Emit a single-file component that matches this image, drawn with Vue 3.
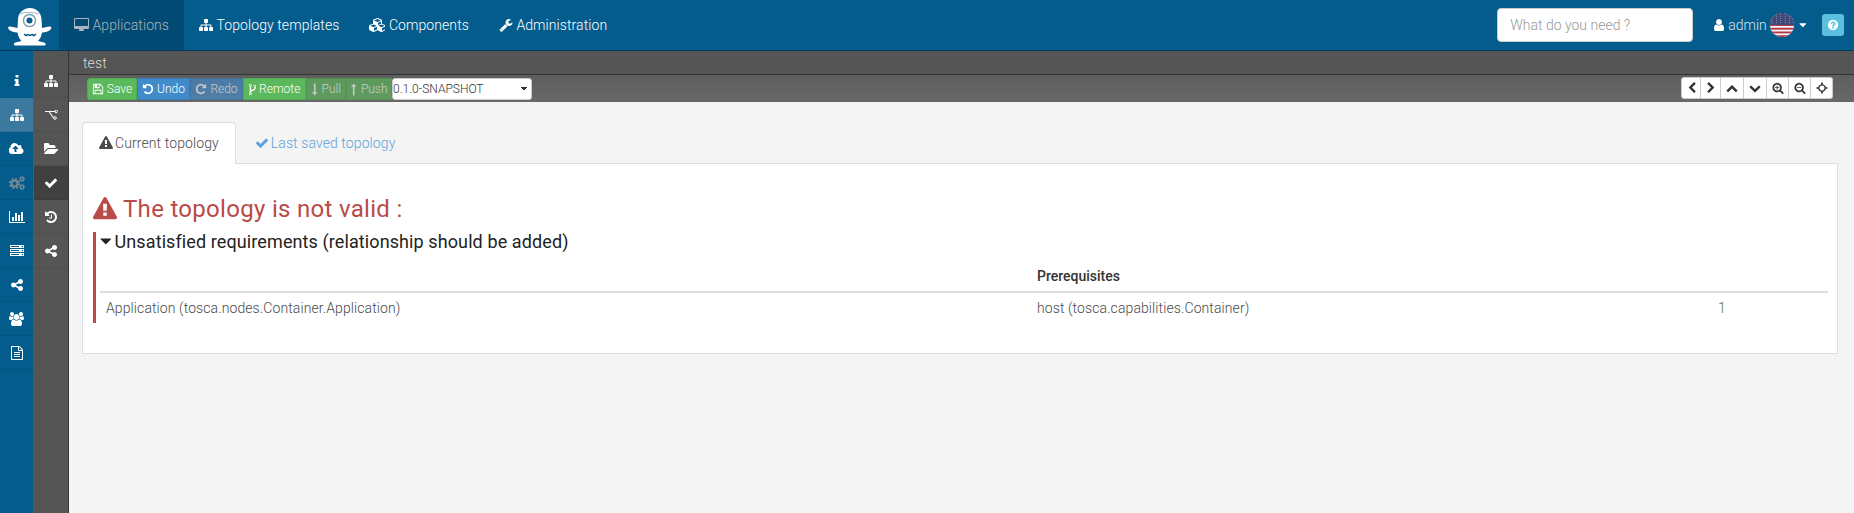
<script setup>
import { h } from 'vue';

// font-awesome like glyphs, 1792 units = 1em
const glyphs = {
  info: [1792, 'M1216 1344v128q0 26-19 45t-45 19h-512q-26 0-45-19t-19-45v-128q0-26 19-45t45-19h64v-384h-64q-26 0-45-19t-19-45v-128q0-26 19-45t45-19h384q26 0 45 19t19 45v576h64q26 0 45 19t19 45zm-128-1152v192q0 26-19 45t-45 19h-256q-26 0-45-19t-19-45v-192q0-26 19-45t45-19h256q26 0 45 19t19 45z'],
  sitemap: [1792, 'M1792 1248v320q0 40-28 68t-68 28h-320q-40 0-68-28t-28-68v-320q0-40 28-68t68-28h96v-192h-512v192h96q40 0 68 28t28 68v320q0 40-28 68t-68 28h-320q-40 0-68-28t-28-68v-320q0-40 28-68t68-28h96v-192h-512v192h96q40 0 68 28t28 68v320q0 40-28 68t-68 28h-320q-40 0-68-28t-28-68v-320q0-40 28-68t68-28h96v-192q0-52 38-90t90-38h512v-192h-96q-40 0-68-28t-28-68v-320q0-40 28-68t68-28h320q40 0 68 28t28 68v320q0 40-28 68t-68 28h-96v192h512q52 0 90 38t38 90v192h96q40 0 68 28t28 68z'],
  cloud: [1920, 'M1216 864q0-14-9-23l-352-352q-9-9-23-9t-23 9l-351 351q-10 12-10 24 0 14 9 23t23 9h224v352q0 13 9.5 22.5t22.5 9.5h192q13 0 22.5-9.5t9.5-22.5v-352h224q13 0 22.5-9.5t9.5-22.5zm640 288q0 159-112.5 271.5t-271.5 112.5h-1088q-185 0-316.5-131.5t-131.5-316.5q0-130 70-240t188-165q-2-30-2-43 0-212 150-362t362-150q156 0 285.5 87t188.5 231q71-62 166-62 106 0 181 75t75 181q0 76-41 138 130 31 213.5 135.5t83.5 238.5z'],
  chart: [2048, 'M640 896v512h-256v-512h256zm384-512v1024h-256v-1024h256zm1024 1152v128h-2048v-1536h128v1408h1920zm-640-896v768h-256v-768h256zm384-384v1152h-256v-1152h256z'],
  server: [1792, 'M128 1408h1024v-128h-1024v128zm0-512h1024v-128h-1024v128zm1568 448q0-40-28-68t-68-28-68 28-28 68 28 68 68 28 68-28 28-68zm-1568-960h1024v-128h-1024v128zm1568 448q0-40-28-68t-68-28-68 28-28 68 28 68 68 28 68-28 28-68zm0-512q0-40-28-68t-68-28-68 28-28 68 28 68 68 28 68-28 28-68zm96 832v384h-1792v-384h1792zm0-512v384h-1792v-384h1792zm0-512v384h-1792v-384h1792z'],
  share: [1792, 'M1344 1024q133 0 226.5 93.5t93.5 226.5-93.5 226.5-226.5 93.5-226.5-93.5-93.5-226.5q0-12 2-34l-360-180q-92 86-218 86-133 0-226.5-93.5t-93.5-226.5 93.5-226.5 226.5-93.5q126 0 218 86l360-180q-2-22-2-34 0-133 93.5-226.5t226.5-93.5 226.5 93.5 93.5 226.5-93.5 226.5-226.5 93.5q-126 0-218-86l-360 180q2 22 2 34t-2 34l360 180q92-86 218-86z'],
  users: [1920, 'M593 896q-162 5-265 128h-134q-82 0-138-40.5t-56-118.5q0-353 124-353 6 0 43.5 21t97.5 42.5 119 21.5q67 0 133-23-5 37-5 66 0 139 81 256zm1071 637q0 120-73 189.5t-194 69.5h-874q-121 0-194-69.5t-73-189.5q0-53 3.5-103.5t14-109 26.5-108.5 43-97.5 62-81 85.5-53.5 111.5-20q10 0 43 21.5t73 48 107 48 135 21.5 135-21.5 107-48 73-48 43-21.5q61 0 111.5 20t85.5 53.5 62 81 43 97.5 26.5 108.5 14 109 3.5 103.5zm-1024-1277q0 106-75 181t-181 75-181-75-75-181 75-181 181-75 181 75 75 181zm704 384q0 159-112.5 271.5t-271.5 112.5-271.5-112.5-112.5-271.5 112.5-271.5 271.5-112.5 271.5 112.5 112.5 271.5zm576 225q0 78-56 118.5t-138 40.5h-134q-103-123-265-128 81-117 81-256 0-29-5-66 66 23 133 23 59 0 119-21.5t97.5-42.5 43.5-21q124 0 124 353zm-128-609q0 106-75 181t-181 75-181-75-75-181 75-181 181-75 181 75 75 181z'],
  file: [1792, 'M1596 380q28 28 48 76t20 88v1152q0 40-28 68t-68 28h-1344q-40 0-68-28t-28-68v-1600q0-40 28-68t68-28h896q40 0 88 20t76 48zm-444-244v376h376q-10-29-22-41l-313-313q-12-12-41-22zm384 1528v-1024h-416q-40 0-68-28t-28-68v-416h-768v1536h1280zm-1024-864q0-14 9-23t23-9h704q14 0 23 9t9 23v64q0 14-9 23t-23 9h-704q-14 0-23-9t-9-23v-64q0-14 9-23t23-9h704zm0 0zm736 224q14 0 23 9t9 23v64q0 14-9 23t-23 9h-704q-14 0-23-9t-9-23v-64q0-14 9-23t23-9h704zm0 256q14 0 23 9t9 23v64q0 14-9 23t-23 9h-704q-14 0-23-9t-9-23v-64q0-14 9-23t23-9h704z'],
  folder: [1920, 'M1815 952q0 31-31 66l-336 396q-43 51-120.5 86.5t-143.5 35.5h-1088q-34 0-60.5-13t-26.5-43q0-31 31-66l336-396q43-51 120.5-86.5t143.5-35.5h1088q34 0 60.5 13t26.5 43zm-343-344v160h-832q-94 0-197 47.5t-164 119.5l-337 396-5 6q0-4-.5-12.5t-.5-12.5v-960q0-92 66-158t158-66h320q92 0 158 66t66 158v32h544q92 0 158 66t66 158z'],
  check: [1792, 'M1671 566q0 40-28 68l-724 724-136 136q-28 28-68 28t-68-28l-136-136-362-362q-28-28-28-68t28-68l136-136q28-28 68-28t68 28l294 295 656-657q28-28 68-28t68 28l136 136q28 28 28 68z'],
  history: [1792, 'M1664 896q0 156-61 298t-164 245-245 164-298 61q-172 0-327-72.5t-264-204.5q-7-10-6.5-22.5t8.5-20.5l137-138q10-9 25-9 16 2 23 12 73 95 179 147t225 52q104 0 198.5-40.5t163.5-109.5 109.5-163.5 40.5-198.5-40.5-198.5-109.5-163.5-163.5-109.5-198.5-40.5q-98 0-188 35.5t-160 101.5l137 138q31 30 14 69-17 40-59 40h-448q-26 0-45-19t-19-45v-448q0-42 40-59 39-17 69 14l130 129q107-101 244.5-156.5t284.5-55.5q156 0 298 61t245 164 164 245 61 298zm-640-288v448q0 14-9 23t-23 9h-320q-14 0-23-9t-9-23v-64q0-14 9-23t23-9h224v-352q0-14 9-23t23-9h64q14 0 23 9t9 23z'],
  desktop: [1920, 'M1792 992v-832q0-13-9.5-22.5t-22.5-9.5h-1600q-13 0-22.5 9.5t-9.5 22.5v832q0 13 9.5 22.5t22.5 9.5h1600q13 0 22.5-9.5t9.5-22.5zm128-832v1088q0 66-47 113t-113 47h-544q0 37 16 77.5t32 71 16 43.5q0 26-19 45t-45 19h-512q-26 0-45-19t-19-45q0-14 16-43.5t32-70.5 16-78h-544q-66 0-113-47t-47-113v-1088q0-66 47-113t113-47h1600q66 0 113 47t47 113z'],
  cubes: [2048, 'M640 1632l384-192v-314l-384 164v342zm-64-454l404-173-404-173-404 173zm1088 454l384-192v-314l-384 164v342zm-64-454l404-173-404-173-404 173zm-448-293l384-165v-266l-384 164v267zm-64-379l441-189-441-189-441 189zm1088 518v416q0 36-19 67t-52 47l-448 224q-25 14-57 14t-57-14l-448-224q-4-2-7-4-2 2-6 4l-448 224q-25 14-57 14t-57-14l-448-224q-33-16-52-47t-19-67v-416q0-38 21.5-70t56.5-48l434-186v-400q0-38 21.5-70t56.5-48l448-192q23-10 50-10t50 10l448 192q35 16 56.5 48t21.5 70v400l434 186q36 16 57 48t21 70z'],
  wrench: [1792, 'M448 1472q0-26-19-45t-45-19-45 19-19 45 19 45 45 19 45-19 19-45zm644-420l-682 682q-37 37-90 37-52 0-91-37l-106-108q-38-36-38-90 0-53 38-91l681-681q39 98 114.5 173.5t173.5 114.5zm634-435q0 39-23 106-47 134-164.5 217.5t-258.5 83.5q-185 0-316.5-131.5t-131.5-316.5 131.5-316.5 316.5-131.5q58 0 121.5 16.5t107.5 46.5q16 11 16 28t-16 28l-293 169v224l193 107q5-3 79-48.5t135.5-81 70.5-35.5q15 0 23.5 10t8.5 25z'],
  user: [1792, 'M1536 1399q0 109-62.5 187t-150.5 78h-854q-88 0-150.5-78t-62.5-187q0-85 8.5-160.5t31.5-152 58.5-131 94-89 134.5-34.5q131 128 313 128t313-128q76 0 134.5 34.5t94 89 58.5 131 31.5 152 8.5 160.5zm-256-887q0 159-112.5 271.5t-271.5 112.5-271.5-112.5-112.5-271.5 112.5-271.5 271.5-112.5 271.5 112.5 112.5 271.5z'],
  caret: [1152, 'M1088 704q0 26-19 45l-448 448q-19 19-45 19t-45-19l-448-448q-19-19-19-45t19-45 45-19h896q26 0 45 19t19 45z'],
  question: [1792, 'M1024 1376v-192q0-14-9-23t-23-9h-192q-14 0-23 9t-9 23v192q0 14 9 23t23 9h192q14 0 23-9t9-23zm256-672q0-88-55.5-163t-138.5-116-170-41q-243 0-371 213-15 24 8 42l132 100q7 6 19 6 16 0 25-12 53-68 86-92 34-24 86-24 48 0 85.5 26t37.5 59q0 38-20 61t-68 45q-63 28-115.5 86.5t-52.5 125.5v36q0 14 9 23t23 9h192q14 0 23-9t9-23q0-19 21.5-49.5t54.5-49.5q32-18 49-28.5t46-35 44.5-48 28-60.5 12.5-81zm384 192q0 209-103 385.5t-279.5 279.5-385.5 103-385.5-103-279.5-279.5-103-385.5 103-385.5 279.5-279.5 385.5-103 385.5 103 279.5 279.5 103 385.5z'],
  warning: [1792, 'M1024 1375v-190q0-14-9.5-23.5t-22.5-9.5h-192q-13 0-22.5 9.5t-9.5 23.5v190q0 14 9.5 23.5t22.5 9.5h192q13 0 22.5-9.5t9.5-23.5zm-2-374l18-459q0-12-10-19-13-11-24-11h-220q-11 0-24 11-10 7-10 21l17 457q0 10 10 16.5t24 6.5h185q14 0 23.5-6.5t10.5-16.5zm-14-934l768 1408q35 63-2 126-17 29-46.5 46t-63.5 17h-1536q-34 0-63.5-17t-46.5-46q-37-63-2-126l768-1408q17-31 47-49t65-18 65 18 47 49z'],
  save: [1792, 'M512 1536h768v-384h-768v384zm896 0h128v-896q0-14-10-38.5t-20-34.5l-281-281q-10-10-34-20t-39-10v416q0 40-28 68t-68 28h-576q-40 0-68-28t-28-68v-416h-128v1280h128v-416q0-40 28-68t68-28h832q40 0 68 28t28 68v416zm-384-928v-320q0-13-9.5-22.5t-22.5-9.5h-192q-13 0-22.5 9.5t-9.5 22.5v320q0 13 9.5 22.5t22.5 9.5h192q13 0 22.5-9.5t9.5-22.5zm640 32v928q0 40-28 68t-68 28h-1344q-40 0-68-28t-28-68v-1344q0-40 28-68t68-28h928q40 0 88 20t76 48l280 280q28 28 48 76t20 88z'],
  undo: [1792, 'M1664 896q0 156-61 298t-164 245-245 164-298 61q-172 0-327-72.5t-264-204.5q-7-10-6.5-22.5t8.5-20.5l137-138q10-9 25-9 16 2 23 12 73 95 179 147t225 52q104 0 198.5-40.5t163.5-109.5 109.5-163.5 40.5-198.5-40.5-198.5-109.5-163.5-163.5-109.5-198.5-40.5q-98 0-188 35.5t-160 101.5l137 138q31 30 14 69-17 40-59 40h-448q-26 0-45-19t-19-45v-448q0-42 40-59 39-17 69 14l130 129q107-101 244.5-156.5t284.5-55.5q156 0 298 61t245 164 164 245 61 298z'],
  repeat: [1792, 'M1664 256v448q0 26-19 45t-45 19h-448q-42 0-59-40-17-39 14-69l138-138q-148-137-349-137-104 0-198.5 40.5t-163.5 109.5-109.5 163.5-40.5 198.5 40.5 198.5 109.5 163.5 163.5 109.5 198.5 40.5q119 0 225-52t179-147q7-10 23-12 15 0 25 9l137 138q9 8 9.5 20.5t-7.5 22.5q-109 132-264 204.5t-327 72.5q-156 0-298-61t-245-164-164-245-61-298 61-298 164-245 245-164 298-61q147 0 284.5 55.5t244.5 156.5l130-129q29-31 70-14 39 17 39 59z'],
  fork: [1024, 'M288 1472q0-40-28-68t-68-28-68 28-28 68 28 68 68 28 68-28 28-68zm0-1152q0-40-28-68t-68-28-68 28-28 68 28 68 68 28 68-28 28-68zm640 128q0-40-28-68t-68-28-68 28-28 68 28 68 68 28 68-28 28-68zm96 0q0 52-26 96.5t-70 69.5q-2 287-226 414-67 38-203 81-128 40-169.5 71t-41.5 100v26q44 25 70 69.5t26 96.5q0 80-56 136t-136 56-136-56-56-136q0-52 26-96.5t70-69.5v-820q-44-25-70-69.5t-26-96.5q0-80 56-136t136-56 136 56 56 136q0 52-26 96.5t-70 69.5v497q54-26 154-57 55-17 87.5-29.5t70.5-31 59-39.5 40.5-51 28-69.5 8.5-91.5q-44-25-70-69.5t-26-96.5q0-80 56-136t136-56 136 56 56 136z'],
  down: [1024, 'M512 1740L130 1270H400V60H624V1270H894z'],
  up: [1024, 'M512 52L894 522H624V1732H400V522H130z'],
  left: [1536, 'M1427 301l-531 531 531 531q19 19 19 45t-19 45l-166 166q-19 19-45 19t-45-19l-742-742q-19-19-19-45t19-45l742-742q19-19 45-19t45 19l166 166q19 19 19 45t-19 45z'],
  right: [1536, 'M1363 877l-742 742q-19 19-45 19t-45-19l-166-166q-19-19-19-45t19-45l531-531-531-531q-19-19-19-45t19-45l166-166q19-19 45-19t45 19l742 742q19 19 19 45t-19 45z'],
  chevup: [1792, 'M1683 1331l-166 165q-19 19-45 19t-45-19l-531-531-531 531q-19 19-45 19t-45-19l-166-165q-19-19-19-45.5t19-45.5l742-741q19-19 45-19t45 19l742 741q19 19 19 45.5t-19 45.5z'],
  chevdown: [1792, 'M1683 808l-742 741q-19 19-45 19t-45-19l-742-741q-19-19-19-45.5t19-45.5l166-165q19-19 45-19t45 19l531 531 531-531q19-19 45-19t45 19l166 165q19 19 19 45.5t-19 45.5z'],
  zoomin: [1792, 'M1088 800v64q0 13-9.5 22.5t-22.5 9.5h-224v224q0 13-9.5 22.5t-22.5 9.5h-64q-13 0-22.5-9.5t-9.5-22.5v-224h-224q-13 0-22.5-9.5t-9.5-22.5v-64q0-13 9.5-22.5t22.5-9.5h224v-224q0-13 9.5-22.5t22.5-9.5h64q13 0 22.5 9.5t9.5 22.5v224h224q13 0 22.5 9.5t9.5 22.5zm128 32q0-185-131.5-316.5t-316.5-131.5-316.5 131.5-131.5 316.5 131.5 316.5 316.5 131.5 316.5-131.5 131.5-316.5zm512 832q0 53-37.5 90.5t-90.5 37.5q-54 0-90-38l-343-342q-179 124-399 124-143 0-273.5-55.5t-225-150-150-225-55.5-273.5 55.5-273.5 150-225 225-150 273.5-55.5 273.5 55.5 225 150 150 225 55.5 273.5q0 220-124 399l343 343q37 37 37 90z'],
  zoomout: [1792, 'M1088 800v64q0 13-9.5 22.5t-22.5 9.5h-576q-13 0-22.5-9.5t-9.5-22.5v-64q0-13 9.5-22.5t22.5-9.5h576q13 0 22.5 9.5t9.5 22.5zm128 32q0-185-131.5-316.5t-316.5-131.5-316.5 131.5-131.5 316.5 131.5 316.5 316.5 131.5 316.5-131.5 131.5-316.5zm512 832q0 53-37.5 90.5t-90.5 37.5q-54 0-90-38l-343-342q-179 124-399 124-143 0-273.5-55.5t-225-150-150-225-55.5-273.5 55.5-273.5 150-225 225-150 273.5-55.5 273.5 55.5 225 150 150 225 55.5 273.5q0 220-124 399l343 343q37 37 37 90z'],
  target: [1792, 'M896 320a576 576 0 1 1-.1 0zm0 208a368 368 0 1 0 .1 0zM768 64h256v400H768zM768 1328h256v400H768zM64 768h400v256H64zM1328 768h400v256h-400z'],
};

const Fa = (props) => {
  const [w, d] = glyphs[props.n];
  const size = props.s || 14;
  return h('svg', {
    class: 'fa',
    viewBox: `0 0 ${w} 1792`,
    width: (w / 1792) * size,
    height: size,
  }, [h('path', { d, fill: 'currentColor' })]);
};
Fa.props = ['n', 's'];

const navItems = [
  { icon: 'desktop', label: 'Applications', active: true },
  { icon: 'sitemap', label: 'Topology templates' },
  { icon: 'cubes', label: 'Components' },
  { icon: 'wrench', label: 'Administration' },
];

const mainSide = [
  { icon: 'info' },
  { icon: 'sitemap', active: true },
  { icon: 'cloud' },
  { icon: 'cogs', muted: true },
  { icon: 'chart' },
  { icon: 'server' },
  { icon: 'share' },
  { icon: 'users' },
  { icon: 'file' },
];

const subSide = [
  { icon: 'sitemap' },
  { icon: 'branch' },
  { icon: 'folder' },
  { icon: 'check', active: true },
  { icon: 'history' },
  { icon: 'share' },
];

const actions = [
  { icon: 'save', label: 'Save', kind: 'green', w: 50, s: 12 },
  { icon: 'undo', label: 'Undo', kind: 'blue', w: 53, s: 12 },
  { icon: 'repeat', label: 'Redo', kind: 'blue off', w: 53, s: 12 },
  { icon: 'fork', label: 'Remote', kind: 'green', w: 63, s: 13 },
  { icon: 'down', label: 'Pull', kind: 'green off', w: 40, s: 13 },
  { icon: 'up', label: 'Push', kind: 'green off', w: 46, s: 13 },
];

const viewTools = [
  { icon: 'left', cls: 'narrow' },
  { icon: 'right', cls: 'narrow' },
  { icon: 'chevup', cls: 'wide' },
  { icon: 'chevdown', cls: 'wide' },
  { icon: 'zoomin', cls: 'mid' },
  { icon: 'zoomout', cls: 'mid' },
  { icon: 'target', cls: 'mid' },
];

const stripes = [0, 2, 4, 6, 8, 10, 12];
const stars = [];
for (let y = 1; y < 12; y += 2.2) {
  for (let x = 1; x < 12; x += 2.2) stars.push({ x, y });
}
</script>

<template>
  <div class="page">
    <header class="topbar">
      <div class="logo">
        <svg width="44" height="40" viewBox="0 0 44 40">
          <path fill="#fff" d="M22 1c6 0 11 4 11.500 11l.5 9 7-1.500c2-.5 3 1 2 2.500-1.500 2-5 3.500-9 3.500-.5 4-2.500 7-4 8.500l6 1.500c2 .5 2.500 3-.5 3H8c-3 0-2.500-2.500-.5-3l6-1.500c-1.500-1.500-3.500-4.500-4-8.500-4 0-7.500-1.500-9-3.500-1-1.500 0-3 2-2.500L9.500 21l.5-9C10.500 5 16 1 22 1z"/>
          <circle cx="21.500" cy="13.500" r="6.800" fill="#7f9fb3"/>
          <circle cx="21.500" cy="13.500" r="5.300" fill="#fff"/>
          <circle cx="21.500" cy="13.500" r="3" fill="#045c8d"/>
          <path d="M12 6.500c5-1.500 13-1.500 19 .5" fill="none" stroke="#9fb9c9" stroke-width="1"/>
          <path d="M16 27l2 1.500 2-1 2 1 2-1 2 1 2-1.500" fill="none" stroke="#045c8d" stroke-width="1.500"/>
        </svg>
      </div>
      <nav class="nav">
        <a v-for="item in navItems" :key="item.label" class="nav-link" :class="{ active: item.active }">
          <Fa :n="item.icon" :s="14" />
          <span>{{ item.label }}</span>
        </a>
      </nav>
      <div class="top-right">
        <input class="search" type="text" placeholder="What do you need ?" />
        <div class="user">
          <Fa n="user" :s="14" />
          <span class="user-name">admin</span>
          <svg class="flag" width="24" height="24" viewBox="0 0 24 24">
            <defs><clipPath id="flagclip"><circle cx="12" cy="12" r="12"/></clipPath></defs>
            <g clip-path="url(#flagclip)">
              <rect width="24" height="24" fill="#f4f4f4"/>
              <rect v-for="y in stripes" :key="y" x="0" :y="y * 1.85" width="24" height="1.850" fill="#b5344a"/>
              <rect width="24" height="12" fill="#3f4a7a"/>
              <circle v-for="(p, i) in stars" :key="i" :cx="p.x * 2" :cy="p.y" r=".45" fill="#cfd3e4"/>
            </g>
          </svg>
          <Fa class="user-caret" n="caret" :s="12" />
        </div>
        <button class="help"><Fa n="question" :s="12" /></button>
      </div>
    </header>

    <div class="body">
      <aside class="side side-main">
        <a v-for="(item, i) in mainSide" :key="i" class="side-item" :class="{ active: item.active, muted: item.muted }">
          <svg v-if="item.icon === 'cogs'" width="16" height="14" viewBox="0 0 16 14">
            <g fill="none" stroke="currentColor">
              <circle cx="5.500" cy="7.500" r="3" stroke-width="2"/>
              <circle cx="5.500" cy="7.500" r="4.800" stroke-width="1.600" stroke-dasharray="2 1.770"/>
              <circle cx="13" cy="3" r="1.700" stroke-width="1.200"/>
              <circle cx="13" cy="3" r="2.700" stroke-width="1" stroke-dasharray="1 1.120"/>
              <circle cx="13" cy="11" r="1.700" stroke-width="1.200"/>
              <circle cx="13" cy="11" r="2.700" stroke-width="1" stroke-dasharray="1 1.120"/>
            </g>
          </svg>
          <Fa v-else :n="item.icon" :s="14" />
        </a>
      </aside>
      <aside class="side side-sub">
        <a v-for="(item, i) in subSide" :key="i" class="side-item" :class="{ active: item.active }">
          <svg v-if="item.icon === 'branch'" width="13" height="10" viewBox="0 0 13 10">
            <path d="M0 1.500h4l4.500 6.500M4 1.500h6.500" fill="none" stroke="currentColor" stroke-width="1.100"/>
            <circle cx="11.200" cy="1.500" r="1.300" fill="none" stroke="currentColor"/>
            <circle cx="10" cy="8" r="1.300" fill="none" stroke="currentColor"/>
          </svg>
          <Fa v-else :n="item.icon" :s="14" />
        </a>
      </aside>

      <main class="main">
        <div class="title-bar">test</div>
        <div class="toolbar">
          <div class="actions">
            <button v-for="a in actions" :key="a.label" class="act" :class="a.kind" :style="{ width: a.w + 'px' }">
              <Fa :n="a.icon" :s="a.s" />
              <span>{{ a.label }}</span>
            </button>
            <select class="version">
              <option>0.1.0-SNAPSHOT</option>
            </select>
          </div>
          <div class="view-tools">
            <button v-for="t in viewTools" :key="t.icon" class="tool" :class="t.cls">
              <Fa :n="t.icon" :s="12" />
            </button>
          </div>
        </div>

        <div class="content">
          <ul class="tabs">
            <li class="tab current"><Fa n="warning" :s="14" /> Current topology</li>
            <li class="tab"><Fa n="check" :s="14" /> Last saved topology</li>
          </ul>
          <div class="panel">
            <h3 class="invalid"><Fa n="warning" :s="24" /> The topology is not valid :</h3>
            <section class="issue">
              <h4 class="issue-title"><Fa n="caret" :s="18" /> Unsatisfied requirements (relationship should be added)</h4>
              <table class="reqs">
                <colgroup>
                  <col class="c1" />
                  <col class="c2" />
                  <col />
                </colgroup>
                <thead>
                  <tr><th></th><th>Prerequisites</th><th></th></tr>
                </thead>
                <tbody>
                  <tr>
                    <td class="first">Application (tosca.nodes.Container.Application)</td>
                    <td>host (tosca.capabilities.Container)</td>
                    <td class="count">1</td>
                  </tr>
                </tbody>
              </table>
            </section>
          </div>
        </div>
      </main>
    </div>
  </div>
</template>

<style>
html, body { margin: 0; background: #f4f4f4; }
</style>

<style scoped>
.page {
  height: 513px;
  overflow: hidden;
  display: flex;
  flex-direction: column;
  font-family: Roboto, "Liberation Sans", sans-serif;
  font-size: 14px;
  font-weight: 300;
  letter-spacing: .1px;
  color: #4a4a4a;
}
.fa { display: inline-block; vertical-align: -2px; flex: none; }

.topbar {
  height: 51px;
  flex: none;
  box-sizing: border-box;
  display: flex;
  background: #045c8d;
  border-bottom: 1px solid #03395a;
  color: #fff;
}
.logo {
  width: 59px;
  flex: none;
  display: flex;
  align-items: center;
  justify-content: center;
  padding-top: 3px;
  box-sizing: border-box;
}
.nav { display: flex; }
.nav-link {
  display: flex;
  align-items: center;
  gap: 3.500px;
  padding: 0 15px;
  color: #fff;
  letter-spacing: .08px;
}
.nav-link.active { background: #004a73; color: #aab4bc; }
.top-right {
  margin-left: auto;
  display: flex;
  align-items: center;
  padding-right: 10px;
}
.search {
  width: 196px;
  height: 34px;
  box-sizing: border-box;
  padding: 0 12px;
  border: 1px solid #ccc;
  border-radius: 4px;
  background: #fff;
  font: 300 14px Roboto, sans-serif;
  color: #555;
}
.search::placeholder { color: #999; }
.user {
  display: flex;
  align-items: center;
  margin-left: 19px;
  color: #d6e3ec;
}
.user .fa:first-child { color: #fff; }
.user-name { margin-left: 2px; letter-spacing: 0; }
.flag { margin-left: 3.500px; }
.user-caret { margin-left: 5px; color: #fff; }
.help {
  width: 22px;
  height: 22px;
  margin-left: 15px;
  padding: 0;
  border: 0;
  border-radius: 3px;
  background: #5bc0de;
  color: #fff;
  display: flex;
  align-items: center;
  justify-content: center;
}

.body { flex: 1; display: flex; min-height: 0; }
.side {
  flex: none;
  padding-top: 13px;
  box-sizing: border-box;
}
.side-main { width: 34px; background: #045c8d; border-right: 1px solid #4c5c66; }
.side-sub { width: 35px; background: #555; border-right: 1px solid #333; }
.side-item {
  height: 34px;
  display: flex;
  align-items: center;
  justify-content: center;
  color: #fff;
  box-sizing: border-box;
  padding-top: 1px;
  border-bottom: 1px solid rgba(0, 0, 0, .08);
}
.side-main .side-item.active { background: #3b7a9e; }
.side-sub .side-item.active { background: #404040; }
.side-item.muted { color: #7b8b96; }

.main { flex: 1; min-width: 0; display: flex; flex-direction: column; background: #f4f4f4; }
.title-bar {
  height: 24px;
  flex: none;
  box-sizing: border-box;
  padding: 3px 0 0 14px;
  background: #555;
  color: #ddd;
  line-height: 18px;
  font-size: 14px;
  border-bottom: 1px solid #333;
}
.toolbar {
  height: 27px;
  flex: none;
  box-sizing: border-box;
  padding: 3px 21px 0 18px;
  background: linear-gradient(#5e5e5e, #686868);
  display: flex;
  justify-content: space-between;
  align-items: flex-start;
}
.actions { display: flex; }
.act {
  height: 22px;
  padding: 0;
  display: flex;
  align-items: center;
  justify-content: center;
  gap: 3px;
  border: 1px solid transparent;
  font: 300 12px Roboto, sans-serif;
  color: #fff;
  box-sizing: border-box;
}
.act:first-child { border-radius: 3px 0 0 3px; }
.act.green { background: #5cb85c; border-color: #4cae4c; }
.act.blue { background: #428bca; border-color: #357ebd; }
.act.off { opacity: .65; }
.version {
  width: 140px;
  height: 22px;
  box-sizing: border-box;
  padding: 0;
  border: 1px solid #ccc;
  border-radius: 3px;
  appearance: none;
  background-color: #fff;
  background-image: linear-gradient(45deg, transparent 50%, #333 50%), linear-gradient(-45deg, transparent 50%, #333 50%);
  background-size: 4px 4px, 4px 4px;
  background-position: right 7px top 8px, right 3px top 8px;
  background-repeat: no-repeat;
  font: 300 12px Roboto, sans-serif;
  color: #333;
}
.view-tools { display: flex; margin-top: -1px; }
.tool {
  height: 22px;
  padding: 0;
  display: flex;
  align-items: center;
  justify-content: center;
  background: #fff;
  border: 1px solid #ccc;
  border-left: 0;
  color: #333;
  box-sizing: border-box;
}
.tool:first-child { border-left: 1px solid #ccc; border-radius: 3px 0 0 3px; }
.tool:last-child { border-radius: 0 3px 3px 0; }
.narrow { width: 20px; }
.wide { width: 23px; }
.mid { width: 22px; }

.content { padding: 20px 16px 0 13px; }
.tabs {
  list-style: none;
  margin: 0 0 -1px;
  padding: 0;
  display: flex;
  position: relative;
}
.tab {
  height: 42px;
  box-sizing: border-box;
  padding: 0 16px;
  margin-right: 2px;
  display: flex;
  align-items: center;
  gap: 2px;
  border: 1px solid transparent;
  color: #5ca2dc;
}
.tab.current {
  background: #fff;
  color: #4a4a4a;
  border-color: #ddd #ddd #fff;
  border-radius: 4px 4px 0 0;
  z-index: 1;
}
.panel {
  background: #fff;
  border: 1px solid #ddd;
  padding: 28px 9px 30px 10px;
}
.invalid {
  margin: 0 0 6px;
  height: 34px;
  display: flex;
  align-items: center;
  gap: 6px;
  font-size: 24px;
  font-weight: 400;
  letter-spacing: .3px;
  color: #b94a48;
}
.issue {
  border-left: 3px solid #b94a48;
  padding-left: 4px;
}
.issue-title {
  margin: 0;
  height: 18px;
  display: flex;
  align-items: center;
  gap: 3px;
  font-size: 18px;
  font-weight: 400;
  color: #222;
}
.reqs { width: 100%; table-layout: fixed; border-collapse: collapse; }
.c1 { width: 932px; }
.c2 { width: 681px; }
.reqs th {
  height: 42px;
  padding: 10px 5px 0;
  box-sizing: border-box;
  text-align: left;
  font-weight: 500;
  letter-spacing: 0;
  color: #333;
  border-bottom: 2px solid #ddd;
}
.reqs td { height: 31px; padding: 0 5px 1px; box-sizing: border-box; }
.reqs td.first { padding-left: 6px; }
.count { color: #4f7a28; }
</style>
